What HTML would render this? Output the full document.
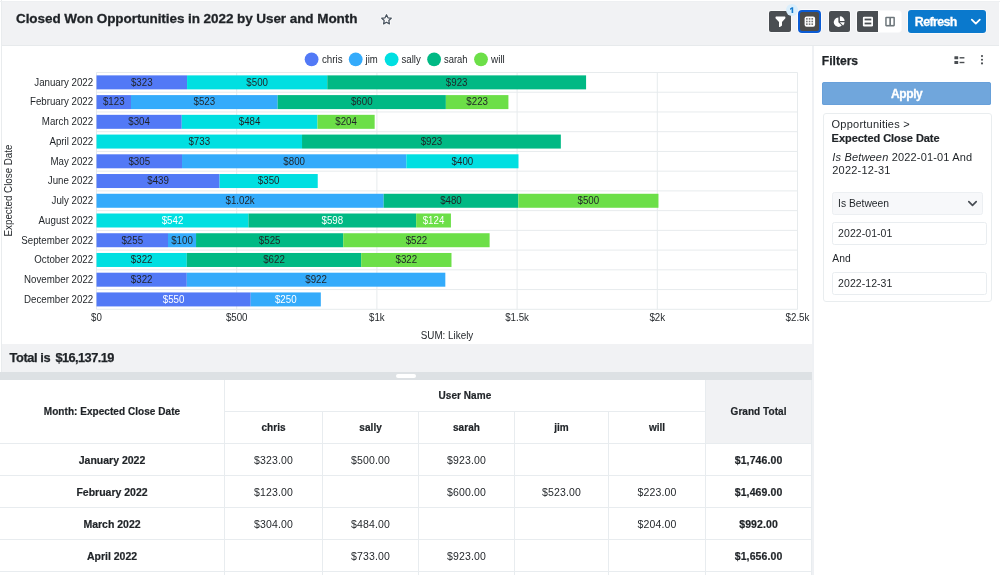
<!DOCTYPE html>
<html><head><meta charset="utf-8"><title>Closed Won Opportunities in 2022 by User and Month</title>
<style>
html,body{margin:0;padding:0;}
body{width:1000px;height:575px;overflow:hidden;background:#fff;position:relative;will-change:transform;font-family:"Liberation Sans",sans-serif;color:#1f2327;}
*{box-sizing:border-box;}
.abs{position:absolute;white-space:nowrap;}
#hdr{position:absolute;left:2px;top:1.6px;width:997px;height:43.4px;background:#f1f2f4;}
#hdrline{position:absolute;left:2px;top:45px;width:997px;height:1px;background:#e7eaec;}
#title{-webkit-text-stroke:0.3px #1f2327;position:absolute;left:16px;top:11.4px;font-size:13.5px;line-height:16px;font-weight:bold;white-space:nowrap;letter-spacing:-0.069px;}
.btn{position:absolute;background:#4a4e52;border-radius:2px;box-shadow:0 0 0 0.8px rgba(255,255,255,0.7);}
#total{position:absolute;left:2px;top:344px;width:812px;height:28px;background:#f1f2f4;font-weight:bold;font-size:12.8px;line-height:28.8px;padding-left:7.5px;letter-spacing:-0.360px;}
.tt{top:344px;font-weight:bold;font-size:12.8px;line-height:28.8px;-webkit-text-stroke:0.25px #1f2327;}
#split{position:absolute;left:0px;top:372px;width:812.3px;height:8px;background:#dde1e4;}
#split i{position:absolute;left:396px;top:2px;width:20px;height:4px;border-radius:2px;background:#fff;}
#tbl{position:absolute;left:0;top:380px;width:813px;height:195px;overflow:hidden;font-size:10.5px;}
#tbl .c{position:absolute;border-right:1px solid #e8ecef;border-bottom:1px solid #e8ecef;text-align:center;line-height:32px;white-space:nowrap;color:#1f2327;}
#tbl .h{font-weight:bold;font-size:10px;letter-spacing:0.05px;-webkit-text-stroke:0.2px #1f2327;}
#tbl .b{font-weight:bold;-webkit-text-stroke:0.2px #1f2327;}
#tbl .v{letter-spacing:0.16px;}
#tbl .g{letter-spacing:0.1px;}
#tbl .gt{background:#f1f2f4;}
#apply{position:absolute;left:822.4px;top:82.2px;width:168.6px;height:22.6px;background:#70a6dc;box-shadow:inset 0 0 0 0.8px #669fd9;border-radius:2.5px;color:#fff;font-weight:bold;font-size:12px;text-align:center;line-height:25.4px;letter-spacing:-0.42px;-webkit-text-stroke:0.3px #fff;}
#card{position:absolute;left:823px;top:113px;width:169px;height:189px;border:1px solid #e9edef;border-radius:3px;background:#fff;}
.inp{position:absolute;left:832.1px;width:154.5px;height:23px;border:1.3px solid #e9edf0;border-radius:2.5px;background:#fff;font-size:10.5px;line-height:21px;padding-left:5px;color:#1f2327;letter-spacing:0.06px;}
</style></head><body>
<div class="abs" style="left:0.8px;top:0px;width:0.8px;height:380px;background:#e9ecee"></div><div class="abs" style="left:0px;top:0.8px;width:1000px;height:0.8px;background:#eef0f2"></div><div id="hdr"></div><div id="hdrline"></div>
<div id="title">Closed Won Opportunities in 2022 by User and Month</div>
<svg class="abs" style="left:380.2px;top:13.2px" width="13" height="13" viewBox="0 0 24 24" fill="none" stroke-linejoin="round"><path d="M12 3.2l2.700 5.600 6.100.8-4.500 4.300 1.100 6.100-5.400-3-5.400 3 1.100-6.100-4.500-4.300 6.100-.8z" stroke="#fff" stroke-opacity="0.85" stroke-width="5.200"/><path d="M12 3.2l2.700 5.600 6.100.8-4.500 4.300 1.100 6.100-5.400-3-5.400 3 1.100-6.100-4.500-4.300 6.100-.8z" stroke="#47525d" stroke-width="2.300"/></svg>
<!-- toolbar -->
<div class="btn" style="left:769.2px;top:10.7px;width:21.5px;height:21.3px"></div>
<svg class="abs" style="left:769px;top:10px" width="23" height="23" viewBox="769 10 23 23"><path d="M775.3 16.6h9.5c.4 0 .6.3.6.6v.9c0 .2-.1.4-.2.5l-3.200 3.500v3.200c0 .2-.1.300-.2.400l-1.900 1.300c-.4.300-.9 0-.9-.5v-4.400l-3.300-3.500c-.1-.1-.2-.3-.2-.5v-.9c0-.3.300-.6.600-.6z" fill="#fff"/></svg>
<div class="abs" style="left:785.6px;top:3.8px;width:12px;height:12px;border-radius:50%;background:#d9eefc;"></div>
<svg class="abs" style="left:785px;top:3px" width="14" height="14" viewBox="785 3 14 14"><path d="M793.200 7.200V12.900H791.600V9.100L790 10V8.500L791.900 7.200Z" fill="#167ccf"/></svg>
<div class="abs" style="left:798.1px;top:10px;width:22.7px;height:23px;background:#4c4c4b;border:2px solid #0b5bd3;border-radius:4px;box-shadow:0 0 0 0.800px rgba(255,255,255,0.85)"></div>
<svg class="abs" style="left:798px;top:10px" width="23" height="23" viewBox="798 10 23 23"><rect x="804.600" y="16.400" width="10.500" height="10.300" rx="2" fill="#fff"/><g fill="#4c4c4b" opacity="0.75"><rect x="806.050" y="18.050" width="1.600" height="1.600"/><rect x="808.750" y="18.050" width="1.600" height="1.600"/><rect x="811.450" y="18.050" width="1.600" height="1.600"/><rect x="806.050" y="20.700" width="1.600" height="1.600"/><rect x="808.750" y="20.700" width="1.600" height="1.600" opacity="1.300"/><rect x="811.450" y="20.700" width="1.600" height="1.600"/><rect x="806.050" y="23.350" width="1.600" height="1.600"/><rect x="808.750" y="23.350" width="1.600" height="1.600"/><rect x="811.450" y="23.350" width="1.600" height="1.600"/></g></svg>
<div class="btn" style="left:828.5px;top:10.7px;width:21.3px;height:21.3px"></div>
<svg class="abs" style="left:828px;top:10px" width="23" height="23" viewBox="828 10 23 23" fill="#fff"><path d="M838.4 17.500a4.700 4.700 0 1 0 3.400 8l-3.400-3.300z"/><path d="M839.900 16.300a4.700 4.700 0 0 1 4.700 4.700h-4.700z"/><path d="M839.800 22.300h4.800a4.900 4.900 0 0 1-1.500 3.200z"/></svg>
<div class="btn" style="left:878.2px;top:10.5px;width:22.4px;height:21.6px;background:#fff;border-radius:0 3px 3px 0"></div>
<svg class="abs" style="left:879px;top:10px" width="23" height="23" viewBox="879 10 23 23"><rect x="885.200" y="16.700" width="9.700" height="9.700" rx="1.100" fill="#6e777c"/><rect x="886.700" y="18.200" width="2.600" height="6.700" fill="#fff"/><rect x="891" y="18.200" width="2.400" height="6.700" fill="#fff"/></svg>
<div class="btn" style="left:857.2px;top:10.7px;border-radius:2px 0 0 2px;width:21px;height:21.3px;box-shadow:-0.5px 0 0 0.8px rgba(255,255,255,0.7)"></div>
<svg class="abs" style="left:857px;top:10px" width="23" height="23" viewBox="857 10 23 23"><rect x="862.900" y="16.700" width="10.100" height="9.700" rx="1.200" fill="#fff"/><rect x="864.600" y="18.600" width="6.700" height="1.800" fill="#4a4e52"/><rect x="864.600" y="22.600" width="6.700" height="1.800" fill="#4a4e52"/></svg>
<div class="abs" style="left:908px;top:10px;width:78.2px;height:22.8px;background:#0a79cd;border-radius:3px;box-shadow:0 0 0 0.800px rgba(255,255,255,0.7)"></div>
<div class="abs" style="left:914.8px;top:10.9px;line-height:23px;color:#fff;font-weight:bold;font-size:12.4px;-webkit-text-stroke:0.3px #fff;letter-spacing:-0.596px">Refresh</div>
<svg class="abs" style="left:969px;top:16px" width="13" height="11" viewBox="969 16 13 11" fill="none" stroke="#fff" stroke-width="1.800" stroke-linecap="round" stroke-linejoin="round"><path d="M971.800 19.700l4 3.900 4-3.900"/></svg>
<svg id="chart" width="813" height="298" viewBox="0 46 813 298" style="position:absolute;left:0;top:46px" font-family="Liberation Sans, sans-serif" font-size="10" fill="#1f2327">
<line x1="96.50" y1="72.5" x2="96.50" y2="309.3" stroke="#e7ebed"/>
<line x1="236.70" y1="72.5" x2="236.70" y2="309.3" stroke="#e7ebed"/>
<line x1="376.90" y1="72.5" x2="376.90" y2="309.3" stroke="#e7ebed"/>
<line x1="517.10" y1="72.5" x2="517.10" y2="309.3" stroke="#e7ebed"/>
<line x1="657.30" y1="72.5" x2="657.30" y2="309.3" stroke="#e7ebed"/>
<line x1="797.50" y1="72.5" x2="797.50" y2="309.3" stroke="#e7ebed"/>
<line x1="96.5" y1="72.50" x2="797.5" y2="72.50" stroke="#e7ebed"/>
<line x1="96.5" y1="92.23" x2="797.5" y2="92.23" stroke="#e7ebed"/>
<line x1="96.5" y1="111.97" x2="797.5" y2="111.97" stroke="#e7ebed"/>
<line x1="96.5" y1="131.70" x2="797.5" y2="131.70" stroke="#e7ebed"/>
<line x1="96.5" y1="151.43" x2="797.5" y2="151.43" stroke="#e7ebed"/>
<line x1="96.5" y1="171.17" x2="797.5" y2="171.17" stroke="#e7ebed"/>
<line x1="96.5" y1="190.90" x2="797.5" y2="190.90" stroke="#e7ebed"/>
<line x1="96.5" y1="210.63" x2="797.5" y2="210.63" stroke="#e7ebed"/>
<line x1="96.5" y1="230.37" x2="797.5" y2="230.37" stroke="#e7ebed"/>
<line x1="96.5" y1="250.10" x2="797.5" y2="250.10" stroke="#e7ebed"/>
<line x1="96.5" y1="269.83" x2="797.5" y2="269.83" stroke="#e7ebed"/>
<line x1="96.5" y1="289.57" x2="797.5" y2="289.57" stroke="#e7ebed"/>
<line x1="96.5" y1="309.30" x2="797.5" y2="309.30" stroke="#e7ebed"/>
<text x="93.2" y="85.67" text-anchor="end" textLength="58.91" lengthAdjust="spacingAndGlyphs">January 2022</text>
<rect x="96.50" y="75.37" width="90.57" height="14.0" fill="#5279f6"/>
<text x="141.78" y="85.67" text-anchor="middle" textLength="21.62" lengthAdjust="spacingAndGlyphs">$323</text>
<rect x="187.07" y="75.37" width="140.20" height="14.0" fill="#00dfe1"/>
<text x="257.17" y="85.67" text-anchor="middle" textLength="21.62" lengthAdjust="spacingAndGlyphs">$500</text>
<rect x="327.27" y="75.37" width="258.81" height="14.0" fill="#00b984"/>
<text x="456.67" y="85.67" text-anchor="middle" textLength="21.62" lengthAdjust="spacingAndGlyphs">$923</text>
<text x="93.2" y="105.40" text-anchor="end" textLength="63.22" lengthAdjust="spacingAndGlyphs">February 2022</text>
<rect x="96.50" y="95.10" width="34.49" height="14.0" fill="#5279f6"/>
<text x="113.74" y="105.40" text-anchor="middle" textLength="21.62" lengthAdjust="spacingAndGlyphs">$123</text>
<rect x="130.99" y="95.10" width="146.65" height="14.0" fill="#34abfb"/>
<text x="204.31" y="105.40" text-anchor="middle" textLength="21.62" lengthAdjust="spacingAndGlyphs">$523</text>
<rect x="277.64" y="95.10" width="168.24" height="14.0" fill="#00b984"/>
<text x="361.76" y="105.40" text-anchor="middle" textLength="21.62" lengthAdjust="spacingAndGlyphs">$600</text>
<rect x="445.88" y="95.10" width="62.53" height="14.0" fill="#6cdf48"/>
<text x="477.14" y="105.40" text-anchor="middle" textLength="21.62" lengthAdjust="spacingAndGlyphs">$223</text>
<text x="93.2" y="125.13" text-anchor="end" textLength="51.33" lengthAdjust="spacingAndGlyphs">March 2022</text>
<rect x="96.50" y="114.83" width="85.24" height="14.0" fill="#5279f6"/>
<text x="139.12" y="125.13" text-anchor="middle" textLength="21.62" lengthAdjust="spacingAndGlyphs">$304</text>
<rect x="181.74" y="114.83" width="135.71" height="14.0" fill="#00dfe1"/>
<text x="249.60" y="125.13" text-anchor="middle" textLength="21.62" lengthAdjust="spacingAndGlyphs">$484</text>
<rect x="317.46" y="114.83" width="57.20" height="14.0" fill="#6cdf48"/>
<text x="346.06" y="125.13" text-anchor="middle" textLength="21.62" lengthAdjust="spacingAndGlyphs">$204</text>
<text x="93.2" y="144.87" text-anchor="end" textLength="43.77" lengthAdjust="spacingAndGlyphs">April 2022</text>
<rect x="96.50" y="134.57" width="205.53" height="14.0" fill="#00dfe1"/>
<text x="199.27" y="144.87" text-anchor="middle" textLength="21.62" lengthAdjust="spacingAndGlyphs">$733</text>
<rect x="302.03" y="134.57" width="258.81" height="14.0" fill="#00b984"/>
<text x="431.44" y="144.87" text-anchor="middle" textLength="21.62" lengthAdjust="spacingAndGlyphs">$923</text>
<text x="93.2" y="164.60" text-anchor="end" textLength="42.69" lengthAdjust="spacingAndGlyphs">May 2022</text>
<rect x="96.50" y="154.30" width="85.52" height="14.0" fill="#5279f6"/>
<text x="139.26" y="164.60" text-anchor="middle" textLength="21.62" lengthAdjust="spacingAndGlyphs">$305</text>
<rect x="182.02" y="154.30" width="224.32" height="14.0" fill="#34abfb"/>
<text x="294.18" y="164.60" text-anchor="middle" textLength="21.62" lengthAdjust="spacingAndGlyphs">$800</text>
<rect x="406.34" y="154.30" width="112.16" height="14.0" fill="#00dfe1"/>
<text x="462.42" y="164.60" text-anchor="middle" textLength="21.62" lengthAdjust="spacingAndGlyphs">$400</text>
<text x="93.2" y="184.33" text-anchor="end" textLength="45.40" lengthAdjust="spacingAndGlyphs">June 2022</text>
<rect x="96.50" y="174.03" width="123.10" height="14.0" fill="#5279f6"/>
<text x="158.05" y="184.33" text-anchor="middle" textLength="21.62" lengthAdjust="spacingAndGlyphs">$439</text>
<rect x="219.60" y="174.03" width="98.14" height="14.0" fill="#00dfe1"/>
<text x="268.67" y="184.33" text-anchor="middle" textLength="21.62" lengthAdjust="spacingAndGlyphs">$350</text>
<text x="93.2" y="204.07" text-anchor="end" textLength="41.61" lengthAdjust="spacingAndGlyphs">July 2022</text>
<rect x="96.50" y="193.77" width="287.18" height="14.0" fill="#34abfb"/>
<text x="240.09" y="204.07" text-anchor="middle" textLength="29.18" lengthAdjust="spacingAndGlyphs">$1.02k</text>
<rect x="383.68" y="193.77" width="134.59" height="14.0" fill="#00b984"/>
<text x="450.98" y="204.07" text-anchor="middle" textLength="21.62" lengthAdjust="spacingAndGlyphs">$480</text>
<rect x="518.27" y="193.77" width="140.20" height="14.0" fill="#6cdf48"/>
<text x="588.37" y="204.07" text-anchor="middle" textLength="21.62" lengthAdjust="spacingAndGlyphs">$500</text>
<text x="93.2" y="223.80" text-anchor="end" textLength="54.59" lengthAdjust="spacingAndGlyphs">August 2022</text>
<rect x="96.50" y="213.50" width="151.98" height="14.0" fill="#00dfe1"/>
<text x="172.49" y="223.80" text-anchor="middle" fill="#fff" textLength="21.62" lengthAdjust="spacingAndGlyphs">$542</text>
<rect x="248.48" y="213.50" width="167.68" height="14.0" fill="#00b984"/>
<text x="332.32" y="223.80" text-anchor="middle" fill="#fff" textLength="21.62" lengthAdjust="spacingAndGlyphs">$598</text>
<rect x="416.16" y="213.50" width="34.77" height="14.0" fill="#6cdf48"/>
<text x="433.54" y="223.80" text-anchor="middle" fill="#fff" textLength="21.62" lengthAdjust="spacingAndGlyphs">$124</text>
<text x="93.2" y="243.53" text-anchor="end" textLength="71.87" lengthAdjust="spacingAndGlyphs">September 2022</text>
<rect x="96.50" y="233.23" width="71.50" height="14.0" fill="#5279f6"/>
<text x="132.25" y="243.53" text-anchor="middle" textLength="21.62" lengthAdjust="spacingAndGlyphs">$255</text>
<rect x="168.00" y="233.23" width="28.04" height="14.0" fill="#34abfb"/>
<text x="182.02" y="243.53" text-anchor="middle" textLength="21.62" lengthAdjust="spacingAndGlyphs">$100</text>
<rect x="196.04" y="233.23" width="147.21" height="14.0" fill="#00b984"/>
<text x="269.65" y="243.53" text-anchor="middle" textLength="21.62" lengthAdjust="spacingAndGlyphs">$525</text>
<rect x="343.25" y="233.23" width="146.37" height="14.0" fill="#6cdf48"/>
<text x="416.44" y="243.53" text-anchor="middle" textLength="21.62" lengthAdjust="spacingAndGlyphs">$522</text>
<text x="93.2" y="263.27" text-anchor="end" textLength="58.90" lengthAdjust="spacingAndGlyphs">October 2022</text>
<rect x="96.50" y="252.97" width="90.29" height="14.0" fill="#00dfe1"/>
<text x="141.64" y="263.27" text-anchor="middle" textLength="21.62" lengthAdjust="spacingAndGlyphs">$322</text>
<rect x="186.79" y="252.97" width="174.41" height="14.0" fill="#00b984"/>
<text x="273.99" y="263.27" text-anchor="middle" textLength="21.62" lengthAdjust="spacingAndGlyphs">$622</text>
<rect x="361.20" y="252.97" width="90.29" height="14.0" fill="#6cdf48"/>
<text x="406.34" y="263.27" text-anchor="middle" textLength="21.62" lengthAdjust="spacingAndGlyphs">$322</text>
<text x="93.2" y="283.00" text-anchor="end" textLength="69.16" lengthAdjust="spacingAndGlyphs">November 2022</text>
<rect x="96.50" y="272.70" width="90.29" height="14.0" fill="#5279f6"/>
<text x="141.64" y="283.00" text-anchor="middle" textLength="21.62" lengthAdjust="spacingAndGlyphs">$322</text>
<rect x="186.79" y="272.70" width="258.53" height="14.0" fill="#34abfb"/>
<text x="316.05" y="283.00" text-anchor="middle" textLength="21.62" lengthAdjust="spacingAndGlyphs">$922</text>
<text x="93.2" y="302.73" text-anchor="end" textLength="69.16" lengthAdjust="spacingAndGlyphs">December 2022</text>
<rect x="96.50" y="292.43" width="154.22" height="14.0" fill="#5279f6"/>
<text x="173.61" y="302.73" text-anchor="middle" fill="#fff" textLength="21.62" lengthAdjust="spacingAndGlyphs">$550</text>
<rect x="250.72" y="292.43" width="70.10" height="14.0" fill="#34abfb"/>
<text x="285.77" y="302.73" text-anchor="middle" fill="#fff" textLength="21.62" lengthAdjust="spacingAndGlyphs">$250</text>
<text x="96.50" y="321.1" text-anchor="middle" textLength="10.81" lengthAdjust="spacingAndGlyphs">$0</text>
<text x="236.70" y="321.1" text-anchor="middle" textLength="21.62" lengthAdjust="spacingAndGlyphs">$500</text>
<text x="376.90" y="321.1" text-anchor="middle" textLength="15.67" lengthAdjust="spacingAndGlyphs">$1k</text>
<text x="517.10" y="321.1" text-anchor="middle" textLength="23.78" lengthAdjust="spacingAndGlyphs">$1.5k</text>
<text x="657.30" y="321.1" text-anchor="middle" textLength="15.67" lengthAdjust="spacingAndGlyphs">$2k</text>
<text x="797.50" y="321.1" text-anchor="middle" textLength="23.78" lengthAdjust="spacingAndGlyphs">$2.5k</text>
<text x="447" y="338.9" text-anchor="middle" textLength="52.6" lengthAdjust="spacingAndGlyphs">SUM: Likely</text>
<text transform="translate(11.8,190.5) rotate(-90)" text-anchor="middle" textLength="91.9" lengthAdjust="spacingAndGlyphs">Expected Close Date</text>
<circle cx="311.6" cy="59.3" r="6.9" fill="#5279f6"/>
<text x="321.9" y="63.1" textLength="20.7" lengthAdjust="spacingAndGlyphs">chris</text>
<circle cx="355.7" cy="59.3" r="6.9" fill="#34abfb"/>
<text x="365.6" y="63.1" textLength="12.2" lengthAdjust="spacingAndGlyphs">jim</text>
<circle cx="391.6" cy="59.3" r="6.9" fill="#00dfe1"/>
<text x="401.5" y="63.1" textLength="19.3" lengthAdjust="spacingAndGlyphs">sally</text>
<circle cx="434.1" cy="59.3" r="6.9" fill="#00b984"/>
<text x="444" y="63.1" textLength="23.5" lengthAdjust="spacingAndGlyphs">sarah</text>
<circle cx="481" cy="59.3" r="6.9" fill="#6cdf48"/>
<text x="491" y="63.1" textLength="13.8" lengthAdjust="spacingAndGlyphs">will</text>
</svg>
<div id="total"></div>
<div class="abs tt" style="left:9.6px;letter-spacing:-0.408px">Total is</div>
<div class="abs tt" style="left:55.4px;letter-spacing:-0.563px">$16,137.19</div>
<div id="split"><i></i></div>
<div id="tbl">
<div class="c h" style="left:0;top:0;width:225px;height:64px;line-height:63px">Month: Expected Close Date</div>
<div class="c h" style="left:225px;top:0;width:480.79999999999995px;height:32px">User Name</div>
<div class="c h gt" style="left:705.8px;top:0;width:106.5px;height:64px;line-height:63px">Grand Total</div>
<div class="c h" style="left:225px;top:32px;width:98px;height:32px">chris</div>
<div class="c h" style="left:323px;top:32px;width:96.19999999999999px;height:32px">sally</div>
<div class="c h" style="left:419.2px;top:32px;width:95.50000000000006px;height:32px">sarah</div>
<div class="c h" style="left:514.7px;top:32px;width:94.59999999999991px;height:32px">jim</div>
<div class="c h" style="left:609.3px;top:32px;width:96.5px;height:32px">will</div>
<div class="c b" style="left:0;top:64px;width:225px;height:32px">January 2022</div>
<div class="c v" style="left:225px;top:64px;width:98px;height:32px">$323.00</div>
<div class="c v" style="left:323px;top:64px;width:96.19999999999999px;height:32px">$500.00</div>
<div class="c v" style="left:419.2px;top:64px;width:95.50000000000006px;height:32px">$923.00</div>
<div class="c v" style="left:514.7px;top:64px;width:94.59999999999991px;height:32px"></div>
<div class="c v" style="left:609.3px;top:64px;width:96.5px;height:32px"></div>
<div class="c b g" style="left:705.8px;top:64px;width:106.5px;height:32px">$1,746.00</div>
<div class="c b" style="left:0;top:96px;width:225px;height:32px">February 2022</div>
<div class="c v" style="left:225px;top:96px;width:98px;height:32px">$123.00</div>
<div class="c v" style="left:323px;top:96px;width:96.19999999999999px;height:32px"></div>
<div class="c v" style="left:419.2px;top:96px;width:95.50000000000006px;height:32px">$600.00</div>
<div class="c v" style="left:514.7px;top:96px;width:94.59999999999991px;height:32px">$523.00</div>
<div class="c v" style="left:609.3px;top:96px;width:96.5px;height:32px">$223.00</div>
<div class="c b g" style="left:705.8px;top:96px;width:106.5px;height:32px">$1,469.00</div>
<div class="c b" style="left:0;top:128px;width:225px;height:32px">March 2022</div>
<div class="c v" style="left:225px;top:128px;width:98px;height:32px">$304.00</div>
<div class="c v" style="left:323px;top:128px;width:96.19999999999999px;height:32px">$484.00</div>
<div class="c v" style="left:419.2px;top:128px;width:95.50000000000006px;height:32px"></div>
<div class="c v" style="left:514.7px;top:128px;width:94.59999999999991px;height:32px"></div>
<div class="c v" style="left:609.3px;top:128px;width:96.5px;height:32px">$204.00</div>
<div class="c b g" style="left:705.8px;top:128px;width:106.5px;height:32px">$992.00</div>
<div class="c b" style="left:0;top:160px;width:225px;height:32px">April 2022</div>
<div class="c v" style="left:225px;top:160px;width:98px;height:32px"></div>
<div class="c v" style="left:323px;top:160px;width:96.19999999999999px;height:32px">$733.00</div>
<div class="c v" style="left:419.2px;top:160px;width:95.50000000000006px;height:32px">$923.00</div>
<div class="c v" style="left:514.7px;top:160px;width:94.59999999999991px;height:32px"></div>
<div class="c v" style="left:609.3px;top:160px;width:96.5px;height:32px"></div>
<div class="c b g" style="left:705.8px;top:160px;width:106.5px;height:32px">$1,656.00</div>
<div class="c" style="left:0px;top:192px;width:225px;height:32px"></div>
<div class="c" style="left:225px;top:192px;width:98px;height:32px"></div>
<div class="c" style="left:323px;top:192px;width:96.19999999999999px;height:32px"></div>
<div class="c" style="left:419.2px;top:192px;width:95.50000000000006px;height:32px"></div>
<div class="c" style="left:514.7px;top:192px;width:94.59999999999991px;height:32px"></div>
<div class="c" style="left:609.3px;top:192px;width:96.5px;height:32px"></div>
<div class="c" style="left:705.8px;top:192px;width:106.5px;height:32px"></div>
</div>
<div class="abs" style="left:812.3px;top:46px;width:1.7px;height:529px;background:#eff1f4"></div>
<div class="abs" style="left:821.8px;top:52.6px;font-size:12.1px;font-weight:bold;line-height:16px;-webkit-text-stroke:0.25px #1f2327;letter-spacing:-0.002px">Filters</div>
<svg class="abs" style="left:953.5px;top:55px" width="12" height="10" viewBox="0 0 12 10" fill="#4a4e52"><rect x="0.400" y="1.300" width="3.800" height="3" rx="0.500"/><rect x="0.400" y="6" width="3.800" height="3" rx="0.500"/><rect x="5.600" y="2.100" width="4.800" height="1.400"/><rect x="5.600" y="6.800" width="4.800" height="1.400"/></svg>
<svg class="abs" style="left:979.2px;top:53px" width="6" height="14" viewBox="0 0 6 14" fill="#4a4e52"><circle cx="3" cy="3.100" r="1.050"/><circle cx="3" cy="6.700" r="1.050"/><circle cx="3" cy="10.400" r="1.050"/></svg>
<div id="apply">Apply</div>
<div id="card"></div>
<div class="abs" style="left:831.6px;top:117.2px;font-size:11px;line-height:14px;letter-spacing:0.221px">Opportunities &gt;</div>
<div class="abs" style="left:831.6px;top:131.2px;font-size:11px;line-height:14px;font-weight:bold;-webkit-text-stroke:0.2px #1f2327;letter-spacing:-0.046px">Expected Close Date</div>
<div class="abs" style="left:832.3px;top:149.800px;font-size:11px;line-height:14px;letter-spacing:0.17px"><i>Is Between</i> 2022-01-01 And</div>
<div class="abs" style="left:832.3px;top:163.400px;font-size:11px;line-height:14px;letter-spacing:0.2px">2022-12-31</div>
<div class="inp" style="top:192.1px;width:151.2px;height:22.8px;background:#f7f8fa;border-color:#eceff2;font-size:10.3px;letter-spacing:0">Is Between</div>
<svg class="abs" style="left:967px;top:197.600px" width="11" height="11" viewBox="0 0 11 11" fill="none" stroke="#474d54" stroke-width="1.700" stroke-linecap="round" stroke-linejoin="round"><path d="M1.800 3.600l3.700 3.700L9.200 3.600"/></svg>
<div class="inp" style="top:221.600px;">2022-01-01</div>
<div class="abs" style="left:832.3px;top:251.600px;font-size:10.3px;line-height:14px;">And</div>
<div class="inp" style="top:272.100px;">2022-12-31</div>
</body></html>
